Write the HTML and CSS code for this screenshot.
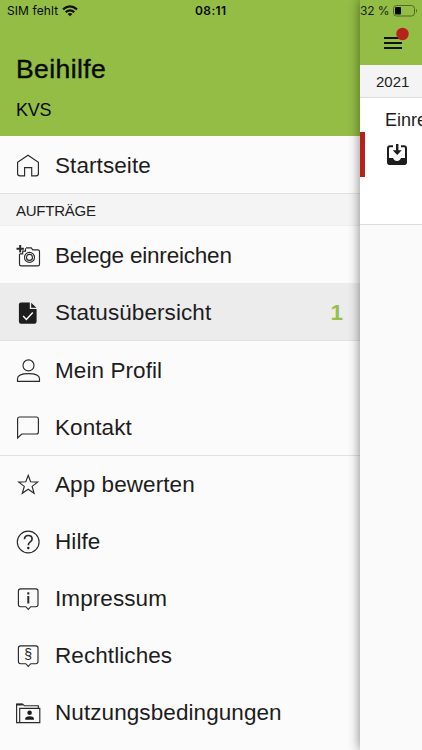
FILE: index.html
```html
<!DOCTYPE html>
<html lang="de">
<head>
<meta charset="utf-8">
<meta name="viewport" content="width=device-width">
<title>Beihilfe</title>
<link rel="stylesheet" href="styles.css">
</head>
<body>
<div class="screen">
  <aside class="drawer">
    <header class="drawer-header">
      <div class="status">
        <span class="carrier">SIM fehlt</span>
        <svg class="wifi" width="16" height="12" viewBox="0 0 16 12"><g fill="none" stroke="#111" stroke-width="2.2"><path d="M1 4.3Q8-1.7 15 4.3"/><path d="M3.7 7.2Q8 3.5 12.3 7.2"/></g><path fill="#111" d="M5.6 8.9Q8 7 10.4 8.9L8 11.3Z"/></svg>
        <time class="clock">08:11</time>
      </div>
      <h1>Beihilfe</h1>
      <p>KVS</p>
    </header>
    <nav>
      <a class="row lined home">
        <svg class="icon" viewBox="0 0 26 26"><path d="M2.600 9.200 13 2.300l10.400 6.900v11.300q0 2.300-2.300 2.300h-4.400v-8.200H9.600v8.200H5q-2.400 0-2.400-2.300Z"/></svg>
        <span>Startseite</span>
      </a>
      <h2>AUFTRÄGE</h2>
      <a class="row">
        <svg class="icon" viewBox="0 0 26 26"><path d="M11 4.800h5.200l1.600 2.100h5.100q1.600 0 1.600 1.600v12.700q0 1.600-1.600 1.600H6.100q-1.600 0-1.600-1.600V11M4.700 10.800h3V8.100h2.800V5.200"/><circle cx="14.500" cy="14.400" r="5"/><circle cx="14.500" cy="14.400" r="3"/><path stroke-width="2" d="M1.500 5.800h7.400M5.200 2.100v7.400"/></svg>
        <span class="tight">Belege einreichen</span>
      </a>
      <a class="row active">
        <svg class="icon" viewBox="0 0 26 26"><path class="solid" d="M6 2.400h8.800v6.700h6.800v12.400q0 2.200-2.200 2.200H6q-2.100 0-2.100-2.200v-17Q3.900 2.400 6 2.400ZM16.200 2.700l5.200 5.100h-5.200Z"/><path class="tick" d="m8.100 16.100 3.300 3.400 6.400-7"/></svg>
        <span>Statusübersicht</span>
        <b class="count">1</b>
      </a>
      <a class="row">
        <svg class="icon" viewBox="0 0 26 26"><circle cx="13.500" cy="7.400" r="5.500"/><path d="M2.500 23.400v-2.600Q2.500 15.600 13.500 15.600t11 5.200v2.600Z"/></svg>
        <span>Mein Profil</span>
      </a>
      <a class="row lined">
        <svg class="icon" viewBox="0 0 26 26"><path d="M2.600 23V4q0-2 2-2h16.800q2 0 2 2v13q0 2-2 2H6.800Z"/></svg>
        <span>Kontakt</span>
      </a>
      <div class="info">
      <a class="row">
        <svg class="icon" viewBox="0 0 26 26"><path d="m13.200 3.300 2.400 6.500 7.100.3-5.600 4.300 2 6.900-5.900-4-5.900 4 2-6.900-5.600-4.300 7.100-.3Z"/></svg>
        <span>App bewerten</span>
      </a>
      <a class="row">
        <svg class="icon" viewBox="0 0 26 26"><circle cx="13.200" cy="13" r="10.900"/><path stroke-width="1.700" d="M9.500 10.300q0-3.800 3.800-3.800t3.800 3.500q0 1.800-2.100 3.100-1.700 1.100-1.700 3.200"/><circle class="solid" cx="13.300" cy="19" r="1.200"/></svg>
        <span>Hilfe</span>
      </a>
      <a class="row">
        <svg class="icon" viewBox="0 0 26 26"><path d="M5.600 2.800h15.200q2.200 0 2.200 2.200v13.500q0 2.200-2.200 2.200h-5l-2.500 2.600-2.500-2.600H5.600q-2.200 0-2.200-2.200V5q0-2.200 2.200-2.200Z"/><path stroke-width="2" d="M13.300 10v7.400M13.300 6.300v2.100"/></svg>
        <span>Impressum</span>
      </a>
      <a class="row">
        <svg class="icon" viewBox="0 0 26 26"><path d="M5.600 2.800h15.200q2.200 0 2.200 2.200v13.500q0 2.200-2.200 2.200h-5l-2.500 2.600-2.500-2.600H5.600q-2.200 0-2.200-2.200V5q0-2.200 2.200-2.200Z"/><text x="13.200" y="16" text-anchor="middle">§</text></svg>
        <span>Rechtliches</span>
      </a>
      <a class="row">
        <svg class="icon" viewBox="0 0 26 26"><path d="M4.600 22.600H1.600V4.200h6.200l1.500 1.500h14v2.600M4.700 22.600V8.400h20.100v14.200Z"/><path stroke-width="2" d="M1.200 4.500h6.600"/><circle class="solid" cx="14.600" cy="12.800" r="2.300"/><path class="solid" d="M10.200 19.800v-1q0-2.500 4.400-2.500t4.400 2.500v1Z"/></svg>
        <span>Nutzungsbedingungen</span>
      </a>
      </div>
    </nav>
  </aside>
  <main class="page">
    <header class="page-header">
      <div class="battery">
        <span>32 %</span>
        <svg width="25" height="12" viewBox="0 0 25 12"><rect x=".5" y=".5" width="21" height="10.500" rx="3" fill="none" stroke="#52692a"/><rect x="2" y="2" width="6" height="7.500" rx="1" fill="#050505"/><path d="M23 3.800q2 1.900 0 3.900Z" fill="#52692a"/></svg>
      </div>
      <svg class="menu" width="28" height="24" viewBox="0 0 28 24"><path stroke="#111" stroke-width="2" d="M0 11h18M0 16h18M0 21h18"/><circle cx="18.500" cy="7" r="6.200" fill="#b5221c"/></svg>
    </header>
    <div class="year">2021</div>
    <section class="card">
      <div class="card-title">Einreichung</div>
      <svg class="inbox" width="20" height="22" viewBox="0 0 20 22"><path fill="none" stroke="#1d1d1d" stroke-width="2" d="M6 3.200H3q-2 0-2 2v14q0 1.800 2 1.800h14q2 0 2-1.800v-14q0-2-2-2h-3"/><path fill="#1d1d1d" d="M1 15h5q1.200 3 4 3t4-3h5v6H1ZM9 1h2.400v6.200h3.300L10.200 12 5.700 7.200H9Z"/></svg>
      <i class="marker"></i>
    </section>
  </main>
</div>
</body>
</html>
```
FILE: styles.css
```css
* { box-sizing: border-box; }

body {
  margin: 0;
  font-family: "Liberation Sans", Arial, sans-serif;
  color: #1d1d1d;
  background: #fafafa;
}

.screen {
  display: grid;
  grid-template-columns: 360px 62px;
  height: 750px;
  overflow: hidden;
}

.drawer { background: #fbfbfb; }

.drawer-header {
  height: 136px;
  padding: 0 16px;
  background: #93bd45;
  color: #080a04;
}

.status {
  display: flex;
  align-items: center;
  height: 22px;
  margin-left: -9px;
  font: 12px/22px Inter, sans-serif;
}

.carrier { width: 55px; white-space: nowrap; letter-spacing: 0.1px; }
.wifi { margin-top: -1px; }
.clock { margin-left: 117px; font-weight: 600; font-size: 12px; letter-spacing: 0.4px; }

.drawer-header h1 {
  margin: 31px 0 0;
  font-size: 26.5px;
  line-height: 32px;
  font-weight: 400;
  letter-spacing: 0.4px;
  -webkit-text-stroke: 0.4px #080a04;
}

.drawer-header p {
  margin: 15px 0 0;
  font-size: 18px;
  line-height: 20px;
  letter-spacing: -0.3px;
}

.row {
  display: flex;
  align-items: center;
  height: 57px;
  padding: 2px 17px 0 14.5px;
  font-size: 22.5px;
  letter-spacing: 0.08px;
  white-space: nowrap;
}

.lined { height: 58px; border-bottom: 1px solid #e0e0e0; }
.home { padding-top: 3px; }
.info .row { padding-top: 0; }
.tight { letter-spacing: -0.2px; }

.active {
  height: 58px;
  background: #ececec;
  border-bottom: 1px solid #e0e0e0;
}

.icon {
  flex: none;
  width: 26px;
  height: 26px;
  margin-right: 14.5px;
  fill: none;
  stroke: #292929;
  stroke-width: 1.15;
}

.icon .solid { fill: #1d1d1d; stroke: none; }
.icon .tick { stroke: #fff; stroke-width: 1.4; }
.icon text { fill: #1d1d1d; stroke: none; font-size: 14px; }

.count { margin-left: auto; color: #96bf4c; }

h2 {
  height: 32px;
  margin: 0;
  padding-left: 16px;
  border-bottom: 1px solid #eee;
  background: #f4f4f4;
  font-size: 15px;
  font-weight: 400;
  line-height: 33px;
  letter-spacing: -0.25px;
}

.page {
  position: relative;
  background: #fafafa;
  box-shadow: -1px 0 10px rgba(0, 0, 0, 0.42);
}

.page-header { height: 65px; background: #93bd45; }

.battery {
  display: flex;
  align-items: center;
  height: 22px;
  gap: 3px;
  font: 12px/22px Inter, sans-serif;
  white-space: nowrap;
}

.battery span { letter-spacing: -0.1px; }
.battery svg { flex: none; }
.menu { display: block; margin: 5px 0 0 24px; }

.year {
  height: 33px;
  padding-left: 16px;
  border-bottom: 1px solid #ddd;
  background: #f4f4f4;
  font-size: 15px;
  line-height: 33px;
}

.card {
  position: relative;
  height: 127px;
  padding: 11px 0 0 25px;
  overflow: hidden;
  border-bottom: 1px solid #ddd;
  background: #fff;
}

.card-title { font-size: 18px; line-height: 22px; }
.inbox { display: block; margin: 12px 0 0 2px; }

.marker {
  position: absolute;
  left: 0;
  top: 34px;
  width: 5px;
  height: 45px;
  background: #b5221c;
}
```
